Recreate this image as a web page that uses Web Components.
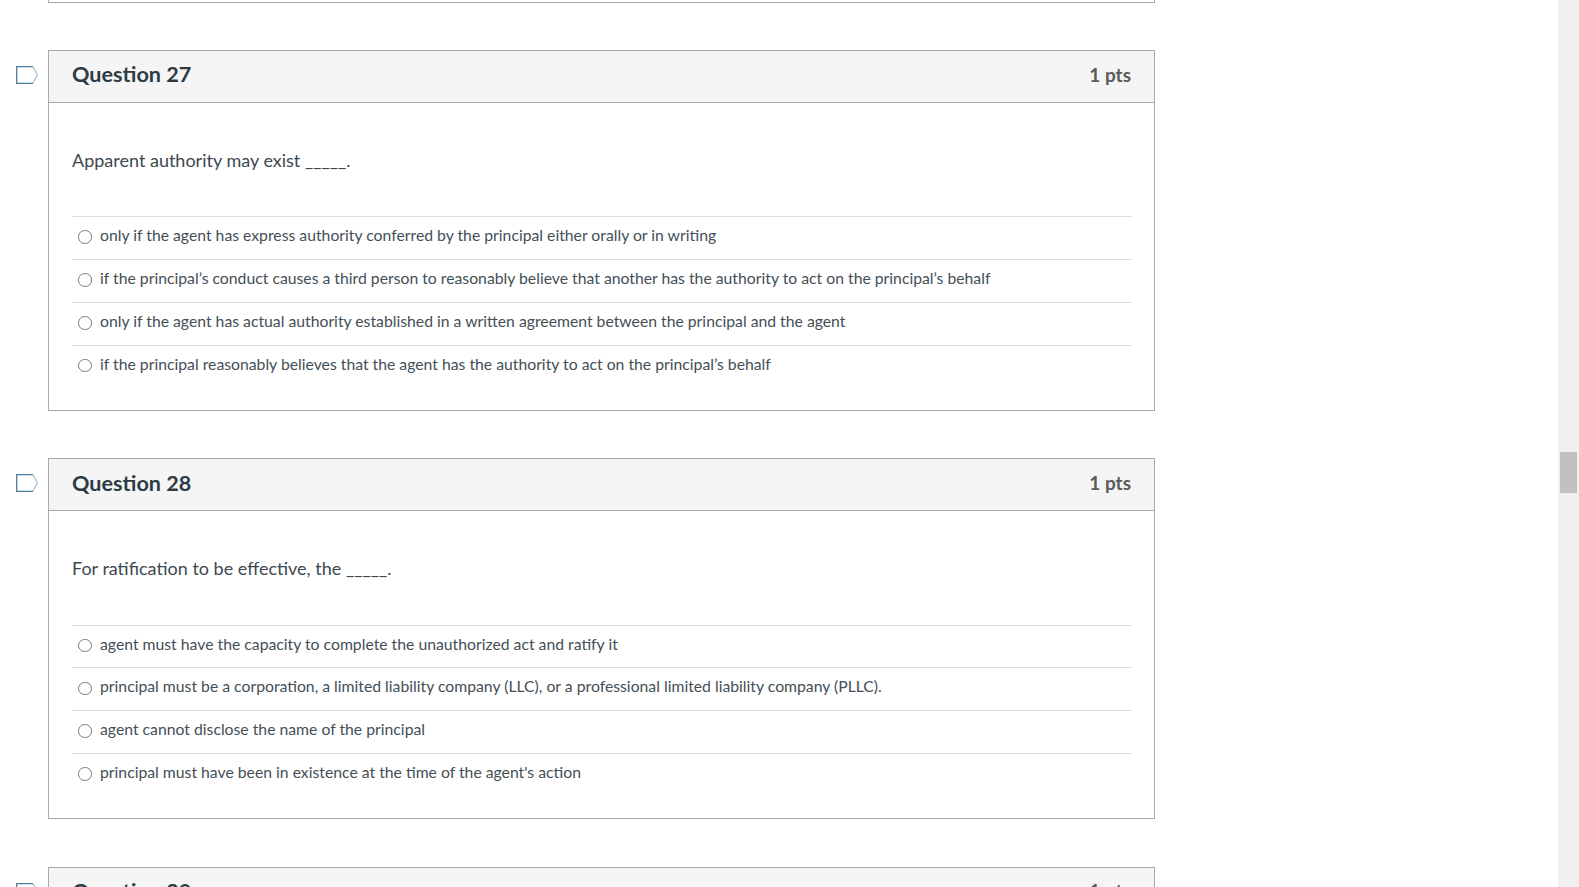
<!DOCTYPE html>
<html><head><meta charset="utf-8"><style>
html,body{margin:0;height:100%;overflow:hidden;background:#fff}
body{font-family:Lato,"Liberation Sans",sans-serif}
</style></head><body>
<quiz-page>
<quiz-question-end></quiz-question-end>
<quiz-question label="Question 27" points="1 pts" prompt="Apparent authority may exist _____.">
<quiz-answer>only if the agent has express authority conferred by the principal either orally or in writing</quiz-answer>
<quiz-answer>if the principal’s conduct causes a third person to reasonably believe that another has the authority to act on the principal’s behalf</quiz-answer>
<quiz-answer>only if the agent has actual authority established in a written agreement between the principal and the agent</quiz-answer>
<quiz-answer>if the principal reasonably believes that the agent has the authority to act on the principal’s behalf</quiz-answer>
</quiz-question>
<quiz-question label="Question 28" points="1 pts" prompt="For ratification to be effective, the _____.">
<quiz-answer>agent must have the capacity to complete the unauthorized act and ratify it</quiz-answer>
<quiz-answer>principal must be a corporation, a limited liability company (LLC), or a professional limited liability company (PLLC).</quiz-answer>
<quiz-answer>agent cannot disclose the name of the principal</quiz-answer>
<quiz-answer>principal must have been in existence at the time of the agent's action</quiz-answer>
</quiz-question>
<quiz-question label="Question 29" points="1 pts" prompt=""></quiz-question>
</quiz-page>
<script>
function def(name, html, init){
  customElements.define(name, class extends HTMLElement{
    constructor(){super();this.attachShadow({mode:'open'}).innerHTML=html;}
    connectedCallback(){ if(init) init(this); }
  });
}
def('quiz-page',`<style>
:host{display:flex;height:887px;overflow:hidden;background:#fff;color:#2d3b45}
.main{flex:1;min-width:0;overflow:hidden;padding-left:48px;display:flex;flex-direction:column;gap:47.4px}
.bar{width:21px;flex:none;background:#f0f0f0;padding:452px 2px 0;box-sizing:border-box}
.thumb{height:41px;background:#c1c1c1}
</style><div class="main"><slot></slot></div><div class="bar"><div class="thumb"></div></div>`);
def('quiz-question-end',`<style>
:host{display:block;flex:none;width:1107px;height:2.6px;box-sizing:border-box;border:1px solid #a8a8a8;border-top:0}
</style>`);
def('quiz-question',`<style>
:host{display:block;flex:none;position:relative;width:1107px;box-sizing:border-box;border:1px solid #a8a8a8;background:#fff}
.flag{position:absolute;left:-33px;top:15px;width:22px;height:18px}
header{display:flex;justify-content:space-between;align-items:center;height:52px;box-sizing:border-box;padding:0 23px;background:#f5f5f5;border-bottom:1px solid #a8a8a8;color:#2d3b45}
h3{margin:0 0 4.5px;font-size:21.6px;font-weight:700;line-height:30px}
.pts{font-size:19px;font-weight:700;color:#5a5a5a;line-height:30px;margin-bottom:3.5px}
.body{padding:39px 22px 22.6px 23px}
.prompt{font-size:18px;line-height:36px;height:74.2px;color:#3d4850}
</style>
<svg class="flag" viewBox="0 0 22 18" fill="none"><path d="M.7 .7H17V17.3H.7Z" fill="#fff"/><path d="M17 .7H.7V17.3H17" stroke="#4e7d9c" stroke-width="1.3"/><path d="M17 .7L21.4 9L17 17.3" stroke="#a9c3d6" stroke-width="1.3"/></svg>
<header><h3></h3><span class="pts"></span></header>
<div class="body"><div class="prompt"></div><slot></slot></div>`,el=>{
  const r=el.shadowRoot;
  r.querySelector('h3').textContent=el.getAttribute('label');
  r.querySelector('.pts').textContent=el.getAttribute('points');
  r.querySelector('.prompt').textContent=el.getAttribute('prompt');
});
def('quiz-answer',`<style>
:host{display:flex;align-items:flex-start;height:42.8px;box-sizing:border-box;border-top:1px solid #dcdcdc;padding-left:6px;gap:8.5px;font-size:15.75px;line-height:19px;color:#444f57}
.r{width:13.5px;height:13.5px;box-sizing:border-box;border:1.3px solid #7a7a7a;border-radius:50%;background:#fff;flex:none;margin-top:13.25px}
.t{margin-top:8px}
</style><span class="r"></span><span class="t"><slot></slot></span>`);
</script>
</body></html>
